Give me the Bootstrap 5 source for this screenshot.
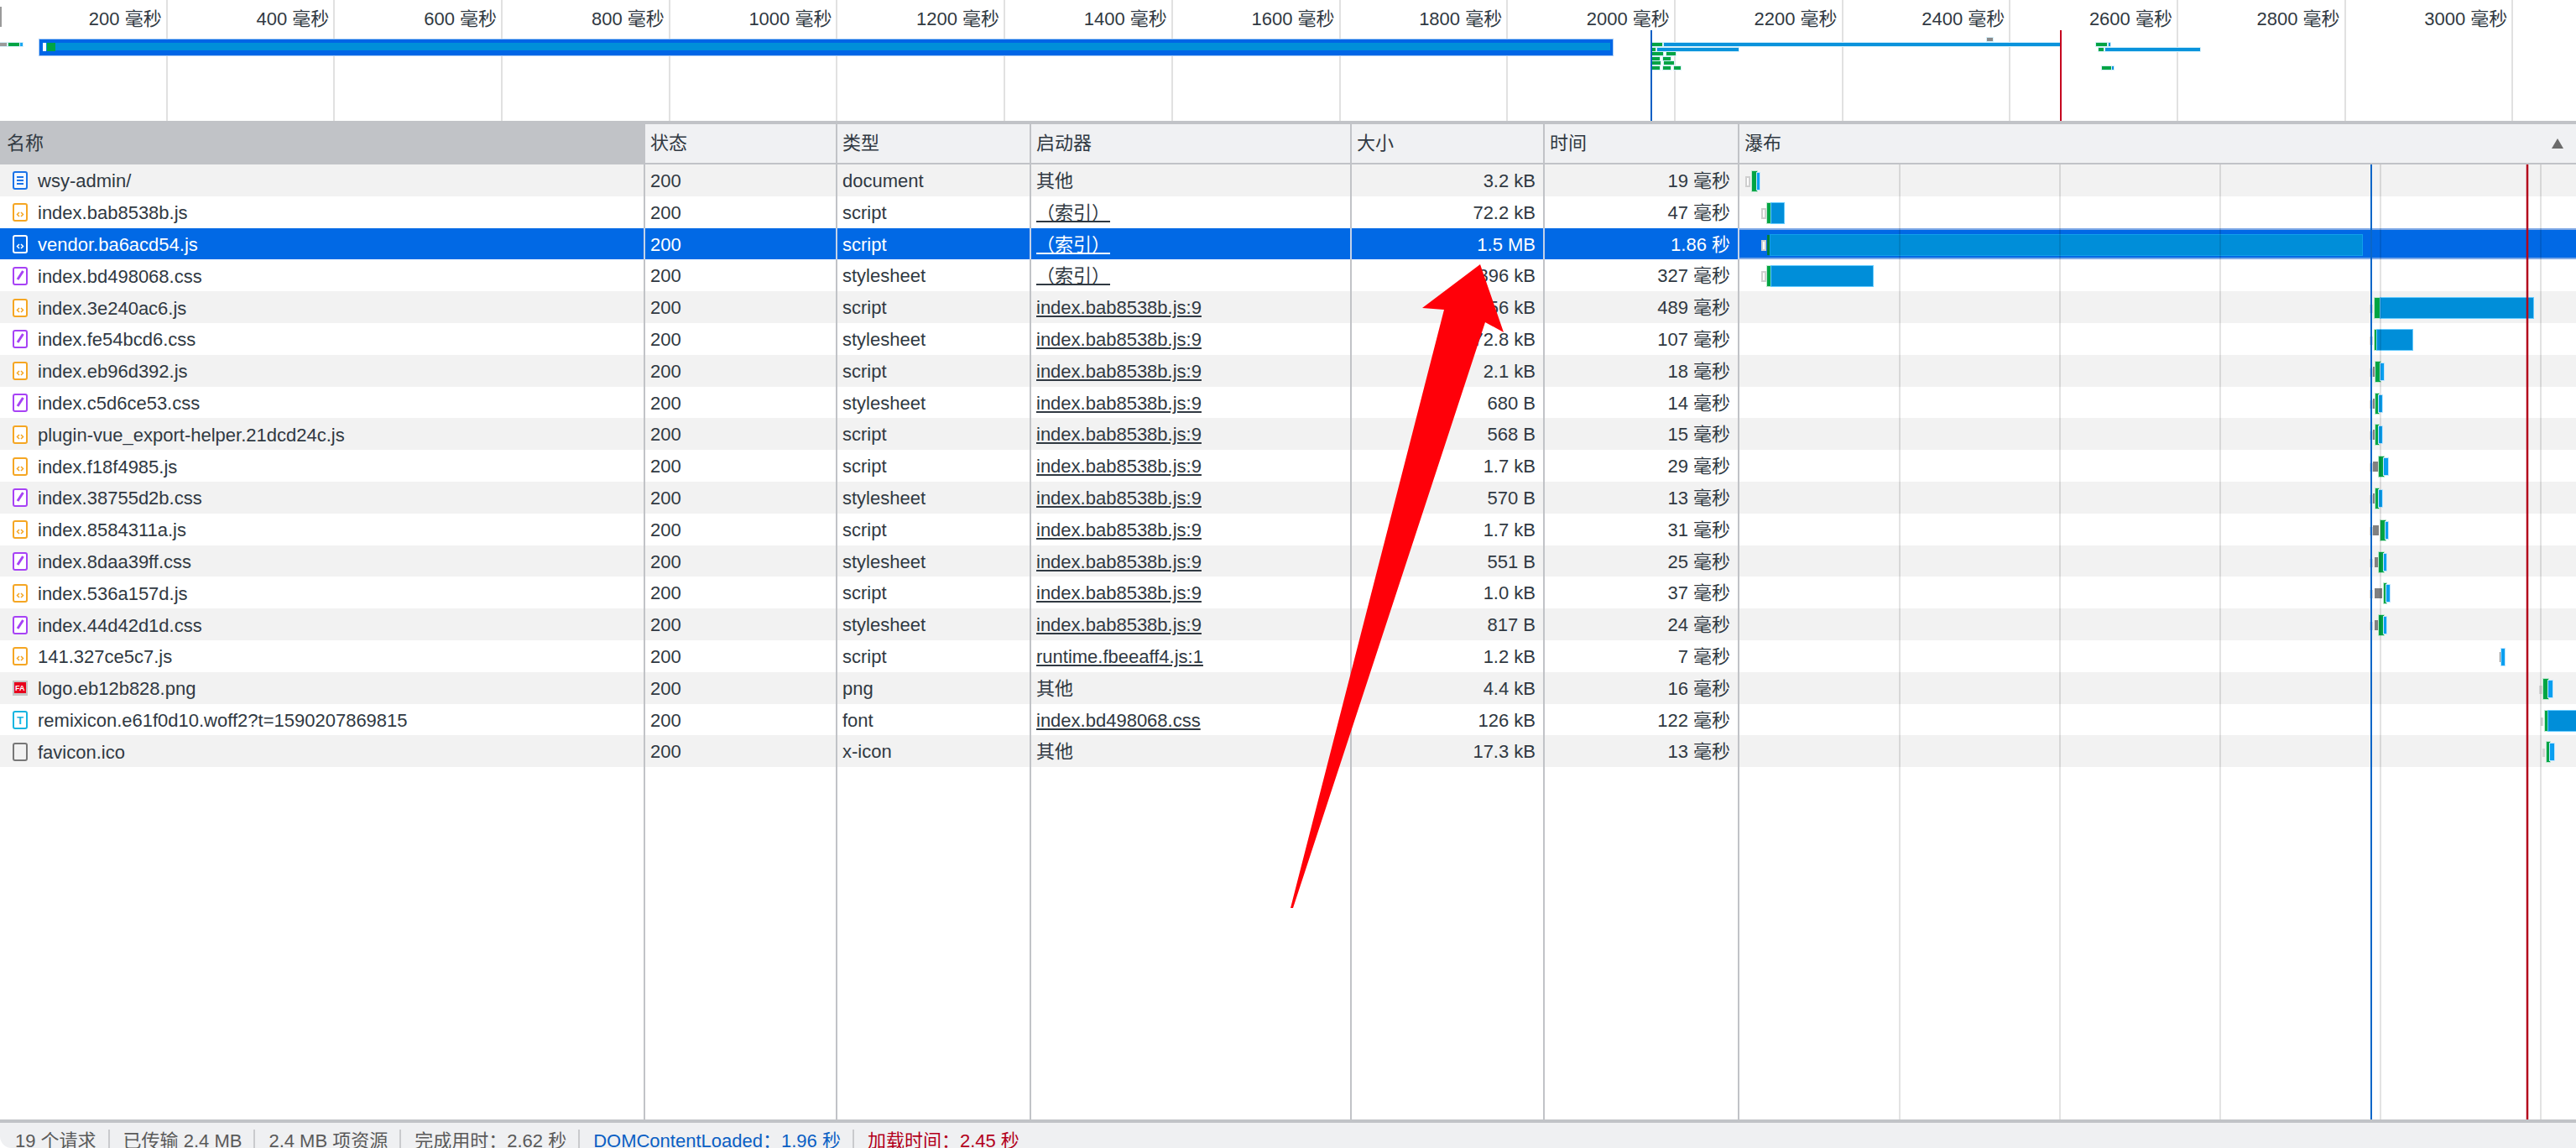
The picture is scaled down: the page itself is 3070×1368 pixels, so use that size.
<!DOCTYPE html>
<html lang="en">

<head>
    <meta charset="UTF-8">
    <meta name="viewport" content="width=device-width, initial-scale=1.0">
    <title>Network</title>
    <link href="https://cdn.jsdelivr.net/npm/bootstrap@5.3.2/dist/css/bootstrap.min.css" rel="stylesheet">
    <style>
        body {
            font-family: "Liberation Sans", "Noto Sans CJK SC", sans-serif;
            font-size: 22px;
            color: #303942;
            background: #fff;
        }

        .overview-pane { height: 144px; flex: none; }
        .tick-cell {
            width: 199.7px;
            height: 144px;
            flex: none;
            padding: 7px 5px 0 0;
            border-right: 2px solid #e1e1e1;
            line-height: 32px;
        }
        .tick-start {
            left: 0;
            top: 8px;
            width: 2px;
            height: 24px;
            background: #9a9a9a;
        }

        .head-row {
            height: 52px;
            flex: none;
            border-top: 4px solid #c1c3c7;
            border-bottom: 2px solid #c1c3c7;
            background: #f0f1f3;
            line-height: 46px;
        }
        .head-row .net-cell { height: 46px; }
        .head-row .sorted-head { background: #c1c3c7; }

        .net-row { height: 37.8px; line-height: 40px; flex: none; }
        .net-row.stripe { background: #f2f2f2; }
        .net-row.picked { background: #0169e5; color: #fff; }
        .net-row.picked .net-cell { border-right-color: #c4d2e8; }
        .net-row.picked .fall-cell { box-shadow: inset 0 2px 0 #7fa9e6, inset 0 -2px 0 #7fa9e6; }
        .net-row.picked .b-load { box-shadow: 0 0 0 1px #12a0ea; }
        .net-row.picked .b-send { background: #00803a; box-shadow: none; }
        .net-cell {
            height: 100%;
            flex: none;
            padding: 0 9px 0 6px;
            border-right: 2px solid #c1c3c7;
            white-space: nowrap;
            overflow: hidden;
        }
        .w-name { width: 769px; }
        .w-status { width: 229px; }
        .w-kind { width: 231px; }
        .w-init { width: 382px; }
        .w-size { width: 230px; }
        .w-time { width: 232px; }
        .net-cell.fall-cell { flex: 1 1 0; border-right: 0; position: relative; }
        .net-cell.w-name { padding-left: 15px; display: flex; align-items: center; }
        .head-row .net-cell.w-name { padding-left: 8px; }
        .file-name { margin: 3px 0 0 12px; }
        .file-icon { flex: none; margin-top: 1px; }
        .net-cell a { color: inherit; }

        .sort-mark {
            right: 15px;
            top: 17px;
            border-left: 7px solid transparent;
            border-right: 7px solid transparent;
            border-bottom: 12px solid #6b6b6b;
        }

        .fall-bar { position: absolute; }
        .b-wait { top: 14px; height: 13px; background: #fff; border: 2px solid #cfcfcf; }
        .b-queue { top: 16px; height: 10px; background: #d6d6d6; }
        .b-stall { top: 14px; height: 12px; background: #808080; }
        .b-send { top: 8px; height: 24px; background: #00a444; box-shadow: 0 0 0 1px #bfe8cf; }
        .b-load { top: 8px; height: 24px; background: #008ed9; box-shadow: 0 0 0 1px #66ccff; }
        .b-small { top: 10px; height: 20px; background: #0a9ff0; box-shadow: 0 0 0 1px #bfe6ff; }

        .fall-lines { left: 2073px; right: 0; top: 0; bottom: 0; pointer-events: none; }
        .fall-line { top: 0; bottom: 0; width: 2px; background: rgba(0, 0, 0, .11); }
        .fall-line.dom-line { background: #0a66c8; }
        .fall-line.load-line { background: #b3001b; box-shadow: 0 0 0 1px rgba(179, 0, 27, .25); }

        .status-bar {
            height: 34px;
            flex: none;
            border-top: 4px solid #c1c3c7;
            border-bottom-left-radius: 14px;
            background: #eff0f2;
            color: #5a5a5a;
            padding-left: 18px;
            line-height: 44px;
            overflow: hidden;
        }
        .status-item { height: 100%; white-space: nowrap; }
        .status-item + .status-item { border-left: 2px solid #c9cacd; margin-left: 14px; padding-left: 16px; margin-top: 8px; line-height: 28px; }
        .status-dom { color: #0a5fc4; }
        .status-load { color: #b3001b; }

        .big-arrow { left: 0; top: 0; pointer-events: none; }
    </style>
</head>

<body>
    <div class="d-flex flex-column vh-100 overflow-hidden position-relative">
        <div id="overview" class="overview-pane position-relative overflow-hidden">
            <div id="ticks" class="d-flex"></div>
            <div class="tick-start position-absolute"></div>
        </div>

        <div class="head-row d-flex">
            <div class="net-cell w-name sorted-head">名称</div>
            <div class="net-cell w-status">状态</div>
            <div class="net-cell w-kind">类型</div>
            <div class="net-cell w-init">启动器</div>
            <div class="net-cell w-size">大小</div>
            <div class="net-cell w-time">时间</div>
            <div class="net-cell fall-cell">瀑布<span class="sort-mark position-absolute"></span></div>
        </div>

        <div class="flex-grow-1 d-flex flex-column position-relative overflow-hidden">
            <div id="rows"></div>
            <div class="flex-grow-1 d-flex">
                <div class="net-cell w-name"></div>
                <div class="net-cell w-status"></div>
                <div class="net-cell w-kind"></div>
                <div class="net-cell w-init"></div>
                <div class="net-cell w-size"></div>
                <div class="net-cell w-time"></div>
            </div>
            <div id="fallLines" class="fall-lines position-absolute"></div>
        </div>

        <div class="status-bar d-flex">
            <div class="status-item">19 个请求</div>
            <div class="status-item">已传输 2.4 MB</div>
            <div class="status-item">2.4 MB 项资源</div>
            <div class="status-item">完成用时：2.62 秒</div>
            <div class="status-item status-dom">DOMContentLoaded：1.96 秒</div>
            <div class="status-item status-load">加载时间：2.45 秒</div>
        </div>

        <svg class="big-arrow position-absolute" width="3070" height="1368">
            <polygon fill="#ff0009" points="1764,315 1695,367 1721,369 1538,1082 1541,1082 1770,384 1792,396"></polygon>
        </svg>
    </div>

    <script>
        const FALL_LEFT = 2073;

        // [icon, name, type, initiator, isLink, size, time, bars]
        const B = 'index.bab8538b.js:9';
        const requests = [
            ['doc', 'wsy-admin/', 'document', '其他', 0, '3.2 kB', '19 毫秒', [['wait', 2080, 2086], ['send', 2088, 2094], ['small', 2094, 2097]]],
            ['js', 'index.bab8538b.js', 'script', '（索引）', 1, '72.2 kB', '47 毫秒', [['wait', 2099, 2105], ['send', 2106, 2111], ['load', 2111, 2126]]],
            ['js', 'vendor.ba6acd54.js', 'script', '（索引）', 1, '1.5 MB', '1.86 秒', [['wait', 2099, 2105], ['send', 2106, 2110], ['load', 2110, 2815]]],
            ['css', 'index.bd498068.css', 'stylesheet', '（索引）', 1, '396 kB', '327 毫秒', [['wait', 2099, 2105], ['send', 2106, 2111], ['load', 2111, 2232]]],
            ['js', 'index.3e240ac6.js', 'script', B, 1, '456 kB', '489 毫秒', [['queue', 2824, 2828], ['send', 2830, 2837], ['load', 2837, 3019]]],
            ['css', 'index.fe54bcd6.css', 'stylesheet', B, 1, '72.8 kB', '107 毫秒', [['queue', 2824, 2828], ['send', 2830, 2833], ['load', 2833, 2875]]],
            ['js', 'index.eb96d392.js', 'script', B, 1, '2.1 kB', '18 毫秒', [['queue', 2824, 2828], ['stall', 2828, 2830], ['send', 2831, 2837], ['small', 2837, 2841]]],
            ['css', 'index.c5d6ce53.css', 'stylesheet', B, 1, '680 B', '14 毫秒', [['queue', 2824, 2828], ['stall', 2828, 2830], ['send', 2831, 2835], ['small', 2835, 2839]]],
            ['js', 'plugin-vue_export-helper.21dcd24c.js', 'script', B, 1, '568 B', '15 毫秒', [['queue', 2824, 2828], ['stall', 2828, 2830], ['send', 2831, 2835], ['small', 2835, 2839]]],
            ['js', 'index.f18f4985.js', 'script', B, 1, '1.7 kB', '29 毫秒', [['queue', 2824, 2828], ['stall', 2828, 2834], ['send', 2835, 2841], ['small', 2841, 2846]]],
            ['css', 'index.38755d2b.css', 'stylesheet', B, 1, '570 B', '13 毫秒', [['queue', 2824, 2828], ['stall', 2828, 2830], ['send', 2831, 2835], ['small', 2835, 2839]]],
            ['js', 'index.8584311a.js', 'script', B, 1, '1.7 kB', '31 毫秒', [['queue', 2824, 2828], ['stall', 2828, 2835], ['send', 2837, 2843], ['small', 2843, 2846]]],
            ['css', 'index.8daa39ff.css', 'stylesheet', B, 1, '551 B', '25 毫秒', [['queue', 2824, 2828], ['stall', 2830, 2834], ['send', 2835, 2841], ['small', 2841, 2844]]],
            ['js', 'index.536a157d.js', 'script', B, 1, '1.0 kB', '37 毫秒', [['queue', 2824, 2828], ['stall', 2830, 2839], ['send', 2841, 2844], ['small', 2844, 2848]]],
            ['css', 'index.44d42d1d.css', 'stylesheet', B, 1, '817 B', '24 毫秒', [['queue', 2824, 2828], ['stall', 2830, 2834], ['send', 2835, 2841], ['small', 2841, 2844]]],
            ['js', '141.327ce5c7.js', 'script', 'runtime.fbeeaff4.js:1', 1, '1.2 kB', '7 毫秒', [['stall', 2979, 2981], ['small', 2981, 2985]]],
            ['png', 'logo.eb12b828.png', 'png', '其他', 0, '4.4 kB', '16 毫秒', [['queue', 3026, 3030], ['send', 3031, 3037], ['small', 3037, 3042]]],
            ['font', 'remixicon.e61f0d10.woff2?t=1590207869815', 'font', 'index.bd498068.css', 1, '126 kB', '122 毫秒', [['queue', 3028, 3031], ['send', 3033, 3037], ['load', 3037, 3072]]],
            ['blank', 'favicon.ico', 'x-icon', '其他', 0, '17.3 kB', '13 毫秒', [['queue', 3030, 3033], ['send', 3035, 3039], ['small', 3039, 3044]]]
        ];

        function fileIcon(kind, picked) {
            const colors = { doc: '#1a73e8', js: '#f5a623', css: '#a742f5', font: '#17b5e0', blank: '#777' };
            if (kind === 'png') {
                return `<svg width="18" height="18" class="file-icon"><rect width="18" height="18" fill="#c6c6c6"/><rect x="2" y="2" width="14" height="13" fill="#e8001c"/><text x="3" y="12" font-size="9" font-weight="700" fill="#fff" font-family="Liberation Sans">FA</text></svg>`;
            }
            const c = picked ? '#fff' : colors[kind];
            let inner = '';
            if (kind === 'doc') inner = `<path d="M5 7h8M5 11h8M5 15h8" stroke="${c}" stroke-width="2"/>`;
            if (kind === 'js') inner = `<path d="M8 11l-2.500 2.500 2.500 2.500M10 11l2.500 2.500-2.500 2.500" fill="none" stroke="${c}" stroke-width="1.500"/>`;
            if (kind === 'css') inner = `<path d="M12.500 5L6 15" stroke="${c}" stroke-width="3"/>`;
            if (kind === 'font') inner = `<text x="9" y="16" text-anchor="middle" font-size="13" font-weight="700" fill="${c}" font-family="Liberation Sans">T</text>`;
            const fill = picked ? 'none' : (kind === 'doc' ? '#f3f8ff' : '#fff');
            return `<svg width="18" height="22" class="file-icon"><rect x="1" y="1" width="16" height="20" rx="2" fill="${kind === 'blank' ? 'none' : fill}" stroke="${c}" stroke-width="2"/>${inner}</svg>`;
        }

        const rowsEl = document.getElementById('rows');
        requests.forEach((r, i) => {
            const picked = i === 2;
            const row = document.createElement('div');
            row.className = 'net-row d-flex' + (picked ? ' picked' : '') + (i % 2 === 0 ? ' stripe' : '');
            const init = r[4] ? `<a href="#">${r[3]}</a>` : r[3];
            const bars = r[7].map(b => {
                const style = `left:${b[1] - FALL_LEFT}px;width:${b[2] - b[1]}px`;
                return `<div class="fall-bar b-${b[0]}" style="${style}"></div>`;
            }).join('');
            row.innerHTML = `
                <div class="net-cell w-name">${fileIcon(r[0], picked)}<span class="file-name">${r[1]}</span></div>
                <div class="net-cell w-status">200</div>
                <div class="net-cell w-kind">${r[2]}</div>
                <div class="net-cell w-init">${init}</div>
                <div class="net-cell w-size text-end">${r[5]}</div>
                <div class="net-cell w-time text-end">${r[6]}</div>
                <div class="net-cell fall-cell">${bars}</div>
            `;
            rowsEl.appendChild(row);
        });

        // time axis labels
        const ticksEl = document.getElementById('ticks');
        for (let t = 200; t <= 3000; t += 200) {
            const cell = document.createElement('div');
            cell.className = 'tick-cell text-end';
            cell.textContent = t + ' 毫秒';
            ticksEl.appendChild(cell);
        }

        // overview strip: [x1, x2, y, colour]
        const GREEN = '#00a444', BLUE = '#0a93dc';
        const overviewBars = [
            [0, 8, 51, '#9a9a9a'], [10, 23, 51, GREEN], [24, 27, 51, '#19a6f0'],
            [2368, 2375, 45, '#8a8a8a'],
            [1968, 1981, 51, GREEN], [1983, 2455, 51, BLUE],
            [1968, 1973, 57, GREEN], [1975, 2072, 57, BLUE],
            [1968, 1982, 62, GREEN], [1986, 1997, 62, GREEN],
            [1968, 1978, 68, GREEN], [1982, 1991, 68, GREEN],
            [1968, 1979, 73, GREEN], [1983, 1995, 73, GREEN],
            [1968, 1978, 79, GREEN], [1982, 1991, 79, GREEN], [1995, 2003, 79, GREEN],
            [2498, 2511, 51, GREEN], [2513, 2515, 51, BLUE],
            [2501, 2507, 57, GREEN], [2509, 2622, 57, BLUE],
            [2505, 2516, 79, GREEN], [2517, 2519, 79, BLUE]
        ];
        const overviewEl = document.getElementById('overview');
        function addOverview(left, top, width, height, color, extra) {
            const el = document.createElement('div');
            el.className = 'position-absolute';
            el.style.cssText = `left:${left}px;top:${top}px;width:${width}px;height:${height}px;background:${color};${extra || ''}`;
            overviewEl.appendChild(el);
        }
        // big vendor bar
        addOverview(47, 47, 1875, 19, '#0066e6', 'box-shadow:0 0 0 1px #a9ccf5');
        addOverview(51, 51, 1868, 9, '#008fd9');
        addOverview(51, 51, 4, 10, '#fff');
        addOverview(56, 51, 10, 10, '#00a444');
        overviewBars.forEach(b => addOverview(b[0], b[2], b[1] - b[0], 4, b[3], 'box-shadow:0 0 0 1px #d5f0fa'));
        addOverview(1967, 36, 2, 108, '#0a5fc4');
        addOverview(2455, 36, 2, 108, '#c5001f');

        // waterfall grid and load markers
        const linesEl = document.getElementById('fallLines');
        [[2263, ''], [2454, ''], [2645, ''], [2836, ''], [3027, ''], [2825, 'dom-line'], [3011, 'load-line']].forEach(l => {
            const el = document.createElement('div');
            el.className = 'fall-line position-absolute ' + l[1];
            el.style.left = (l[0] - FALL_LEFT) + 'px';
            linesEl.appendChild(el);
        });
    </script>

    <script src="https://cdn.jsdelivr.net/npm/bootstrap@5.3.2/dist/js/bootstrap.bundle.min.js"></script>
</body>

</html>
